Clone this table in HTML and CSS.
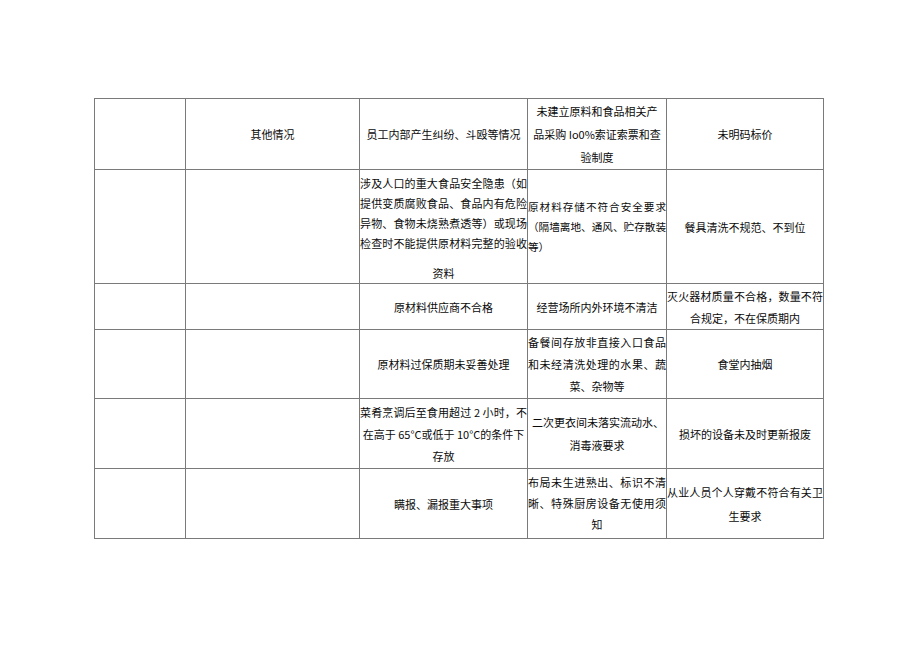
FILE: index.html
```html
<!DOCTYPE html>
<html lang="zh-CN">
<head>
<meta charset="utf-8">
<title>检查表</title>
<link rel="stylesheet" href="styles.css">
</head>
<body>
<div class="page">
<table class="grid">
  <colgroup>
    <col class="c1"><col class="c2"><col class="c3"><col class="c4"><col class="c5">
  </colgroup>
  <tr class="r1">
    <td></td>
    <td>其他情况</td>
    <td>员工内部产生纠纷、斗殴等情况</td>
    <td class="lh23"><div>未建立原料和食品相关产</div><div>品采购 Io0%索证索票和查</div><div>验制度</div></td>
    <td>未明码标价</td>
  </tr>
  <tr class="r2">
    <td></td>
    <td></td>
    <td class="lh20 bot"><div class="j">涉及人口的重大食品安全隐患（如</div><div class="j">提供变质腐败食品、食品内有危险</div><div class="j">异物、食物未烧熟煮透等）或现场</div><div class="j">检查时不能提供原材料完整的验收</div><div class="gap">资料</div></td>
    <td class="lh20 sm"><div class="j">原材料存储不符合安全要求</div><div class="j">（隔墙离地、通风、贮存散装</div><div class="l">等）</div></td>
    <td>餐具清洗不规范、不到位</td>
  </tr>
  <tr class="r3">
    <td></td>
    <td></td>
    <td>原材料供应商不合格</td>
    <td>经营场所内外环境不清洁</td>
    <td class="lh22"><div class="j">灭火器材质量不合格，数量不符</div><div>合规定，不在保质期内</div></td>
  </tr>
  <tr class="r4">
    <td></td>
    <td></td>
    <td>原材料过保质期未妥善处理</td>
    <td class="lh22"><div class="j">备餐间存放非直接入口食品</div><div class="j">和未经清洗处理的水果、蔬</div><div>菜、杂物等</div></td>
    <td>食堂内抽烟</td>
  </tr>
  <tr class="r5">
    <td></td>
    <td></td>
    <td class="lh22"><div class="j">菜肴烹调后至食用超过 2 小时，不</div><div>在高于 65°C或低于 10°C的条件下</div><div>存放</div></td>
    <td class="lh23"><div class="l ind">二次更衣间未落实流动水、</div><div>消毒液要求</div></td>
    <td>损坏的设备未及时更新报废</td>
  </tr>
  <tr class="r6">
    <td></td>
    <td></td>
    <td>瞒报、漏报重大事项</td>
    <td class="lh21"><div class="j">布局未生进熟出、标识不清</div><div class="j">晰、特殊厨房设备无使用须</div><div>知</div></td>
    <td class="lh24"><div class="j">从业人员个人穿戴不符合有关卫</div><div>生要求</div></td>
  </tr>
</table>
</div>
</body>
</html>
```
FILE: styles.css
```css
html, body {
  margin: 0;
  padding: 0;
  background: #ffffff;
}
.page {
  padding: 98px 0 0 94px;
}
.grid {
  border-collapse: collapse;
  table-layout: fixed;
  width: 729px;
  font-family: "Noto Sans CJK SC", "Noto Sans", sans-serif;
  font-size: 11px;
  color: #0a0a0a;
}
.c1 { width: 91px; }
.c2 { width: 174px; }
.c3 { width: 168px; }
.c4 { width: 139px; }
.c5 { width: 157px; }
.grid td {
  border: 1px solid #7a7a7a;
  padding: 0;
  text-align: center;
  vertical-align: middle;
  line-height: 20px;
  white-space: nowrap;
  overflow: visible;
}
.r1 td { height: 70px; }
.r2 td { height: 113px; }
.r3 td { height: 45px; }
.r4 td { height: 68px; }
.r5 td { height: 69px; }
.r6 td { height: 69px; }
.grid td.lh20 { line-height: 20px; }
.grid td.lh21 { line-height: 21px; }
.grid td.lh22 { line-height: 22px; }
.grid td.lh23 { line-height: 23px; }
.grid td.lh24 { line-height: 24px; }
.grid td.sm { font-size: 10.6px; }
.grid td.bot { vertical-align: bottom; }
.j {
  text-align: justify;
  text-align-last: justify;
}
.l {
  text-align: left;
}
.ind {
  padding-left: 4px;
}
.gap {
  margin-top: 10px;
}
```
